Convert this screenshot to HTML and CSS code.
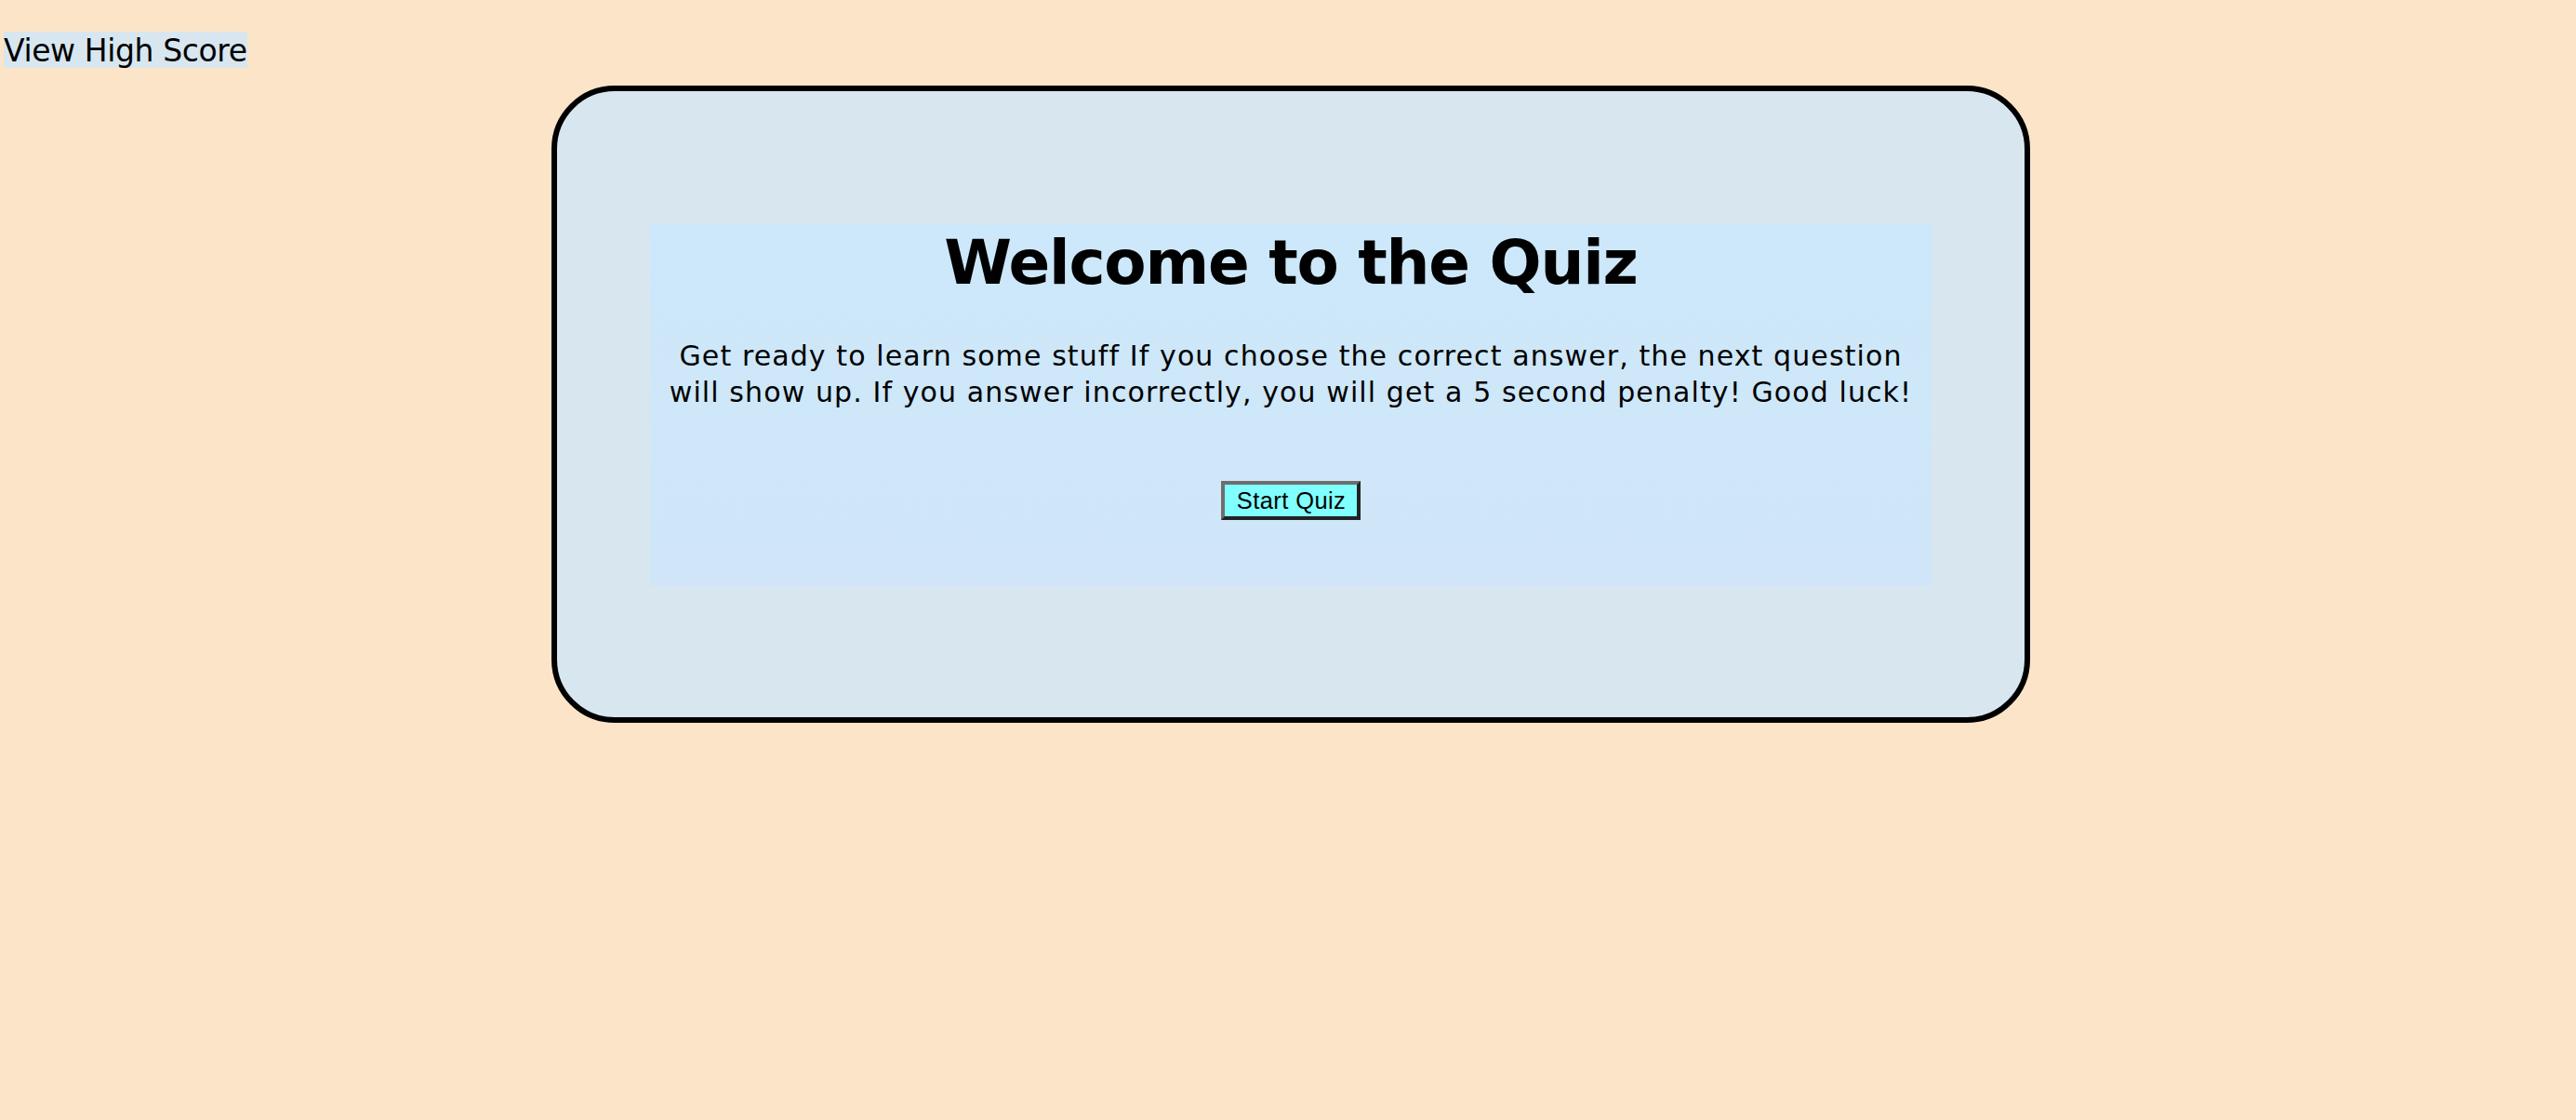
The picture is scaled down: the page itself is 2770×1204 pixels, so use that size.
FILE: index.html
```html
<!DOCTYPE html>
<html lang="en">
<head>
<meta charset="utf-8">
<title>Quiz</title>
<link rel="stylesheet" href="styles.css">
</head>
<body>
<header class="top">
  <span class="high-score">View High Score</span>
</header>
<main class="card">
  <section class="intro">
    <h1 class="title">Welcome to the Quiz</h1>
    <p class="desc">Get ready to learn some stuff If you choose the correct answer, the next question will show up. If you answer incorrectly, you will get a 5 second penalty! Good luck!</p>
    <button class="start" type="button">Start Quiz</button>
  </section>
</main>
</body>
</html>
```
FILE: styles.css
```css
html, body {
  margin: 0;
  padding: 0;
}
body {
  background: #fce4c8;
  font-family: "DejaVu Sans", Verdana, sans-serif;
  color: #000;
}
.top {
  padding: 34px 0 0 4px;
  height: 58px;
}
.high-score {
  display: inline-block;
  background: #d8e6f0;
  font-size: 33px;
  line-height: 39px;
  letter-spacing: -0.4px;
  padding-top: 1px;
  height: 38px;
}
.card {
  box-sizing: border-box;
  width: 1590px;
  height: 685px;
  margin: 0 auto;
  position: relative;
  left: 3px;
  border: 6px solid #000;
  border-radius: 68px;
  background: #d8e6f0;
  padding: 143px 100px 0 100px;
}
.intro {
  box-sizing: border-box;
  height: 389px;
  background: linear-gradient(#cce8fa, #d0e6f8);
  display: flex;
  flex-direction: column;
  align-items: center;
  padding: 3px 14px 0 14px;
  text-align: center;
}
.title {
  margin: 0;
  font-size: 66px;
  font-weight: bold;
  line-height: 77px;
  letter-spacing: -1.25px;
}
.desc {
  margin: 42px 0 0 0;
  font-size: 30px;
  line-height: 39px;
  letter-spacing: 1.1px;
}
.start {
  margin-top: 76px;
  font-family: "Liberation Sans", Arial, sans-serif;
  font-size: 25.5px;
  line-height: 28px;
  letter-spacing: 0.4px;
  padding: 3px 12px 3px 13px;
  background: #80ffff;
  color: #000;
  border: 4px solid;
  border-color: #6e6e6e #222 #222 #6e6e6e;
}
```
